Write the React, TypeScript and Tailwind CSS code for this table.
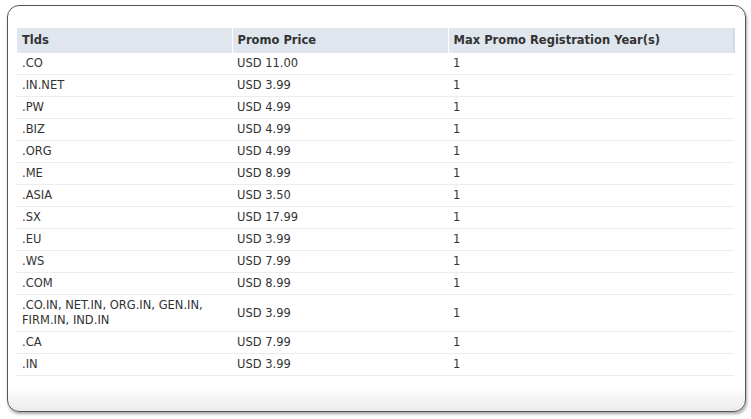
import React from 'react';

const rows: [string, string][] = [
  ['.CO', 'USD 11.00'],
  ['.IN.NET', 'USD 3.99'],
  ['.PW', 'USD 4.99'],
  ['.BIZ', 'USD 4.99'],
  ['.ORG', 'USD 4.99'],
  ['.ME', 'USD 8.99'],
  ['.ASIA', 'USD 3.50'],
  ['.SX', 'USD 17.99'],
  ['.EU', 'USD 3.99'],
  ['.WS', 'USD 7.99'],
  ['.COM', 'USD 8.99'],
  ['.CO.IN, NET.IN, ORG.IN, GEN.IN, FIRM.IN, IND.IN', 'USD 3.99'],
  ['.CA', 'USD 7.99'],
  ['.IN', 'USD 3.99'],
];

export default function App() {
  return (
    <div className="w-[751px] h-[419px] bg-white pt-[5px] pl-[7px] font-['DejaVu_Sans',Verdana,sans-serif] text-[11.5px] text-[#333]">
      <div className="w-[739px] h-[407px] rounded-[12px] border border-[#555] shadow-[1px_2px_3px_rgba(0,0,0,0.35)] bg-gradient-to-b from-white from-[94%] to-[#ebebeb] pt-[22px] px-[9px]">
        <table className="w-[718px] border-collapse">
          <thead>
            <tr className="h-[25px] bg-[#dfe6ee] text-[#333]">
              <th className="w-[215px] text-left pl-[5px] font-bold border-r border-white">Tlds</th>
              <th className="w-[216px] text-left pl-[5px] font-bold border-r border-white">Promo Price</th>
              <th className="text-left pl-[5px] font-bold border-r-2 border-[#d3dae2]">Max Promo Registration Year(s)</th>
            </tr>
          </thead>
          <tbody>
            {rows.map(([tld, price]) => (
              <tr key={tld} className="border-b border-[#ececec]">
                <td className="pl-[5px] pr-2 py-[3px] leading-[15px] align-middle">{tld}</td>
                <td className="pl-[5px] py-[3px] leading-[15px]">{price}</td>
                <td className="pl-[5px] py-[3px] leading-[15px]">1</td>
              </tr>
            ))}
          </tbody>
        </table>
      </div>
    </div>
  );
}
